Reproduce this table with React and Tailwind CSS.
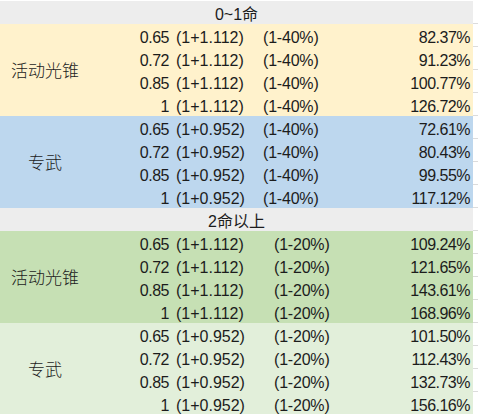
import React from 'react';

const FONT = { fontFamily: '"Liberation Sans", "Noto Sans CJK SC", sans-serif' };

const SECTIONS = [
  {
    title: '0~1命',
    groups: [
      {
        label: '活动光锥',
        bg: 'bg-[#fff2cc]',
        base: '(1+1.112)',
        cut: '(1-40%)',
        values: ['82.37%', '91.23%', '100.77%', '126.72%'],
      },
      {
        label: '专武',
        bg: 'bg-[#bdd7ee]',
        base: '(1+0.952)',
        cut: '(1-40%)',
        values: ['72.61%', '80.43%', '99.55%', '117.12%'],
      },
    ],
    cutWidth: 'w-[87px]',
  },
  {
    title: '2命以上',
    groups: [
      {
        label: '活动光锥',
        bg: 'bg-[#c6e0b4]',
        base: '(1+1.112)',
        cut: '(1-20%)',
        values: ['109.24%', '121.65%', '143.61%', '168.96%'],
      },
      {
        label: '专武',
        bg: 'bg-[#e2efda]',
        base: '(1+0.952)',
        cut: '(1-20%)',
        values: ['101.50%', '112.43%', '132.73%', '156.16%'],
      },
    ],
    cutWidth: 'w-[98px]',
  },
];

const RATES = ['0.65', '0.72', '0.85', '1'];

function Row({ rate, base, cut, value, cutWidth }) {
  return (
    <div className="flex h-[23px] items-end pb-[1px]">
      <div className="w-[79px] text-right tracking-[-0.5px]">{rate}</div>
      <div className={`ml-[7px] ${cutWidth}`}>{base}</div>
      <div className="flex-1 tracking-[-0.2px]">{cut}</div>
      <div className="pr-[3px] text-right tracking-[-0.5px]">{value}</div>
    </div>
  );
}

function Group({ group, cutWidth }) {
  return (
    <div className="flex">
      <div className={`flex w-[473px] ${group.bg}`}>
        <div className="flex w-[90px] items-center justify-center pt-[4px] text-[17px] font-light">
          {group.label}
        </div>
        <div className="flex-1">
          {RATES.map((rate, i) => (
            <Row
              key={rate}
              rate={rate}
              base={group.base}
              cut={group.cut}
              value={group.values[i]}
              cutWidth={cutWidth}
            />
          ))}
        </div>
      </div>
      <div className="w-[5px]">
        {RATES.map((rate) => (
          <div key={rate} className="h-[23px] border-b border-[#dcdcdc]" />
        ))}
      </div>
    </div>
  );
}

export default function App() {
  return (
    <div
      className="h-[414px] w-[478px] overflow-hidden bg-white pt-[1px] text-[16px] leading-[16px] text-[#1c1c1c]"
      style={FONT}
    >
      {SECTIONS.map((section) => (
        <div key={section.title}>
          <div className="flex">
            <div className="flex h-[23px] w-[473px] items-end justify-center bg-[#ededed] pb-[1px]">
              {section.title}
            </div>
            <div className="h-[23px] w-[5px] border-b border-[#dcdcdc]" />
          </div>
          {section.groups.map((group) => (
            <Group key={group.label + group.bg} group={group} cutWidth={section.cutWidth} />
          ))}
        </div>
      ))}
    </div>
  );
}
